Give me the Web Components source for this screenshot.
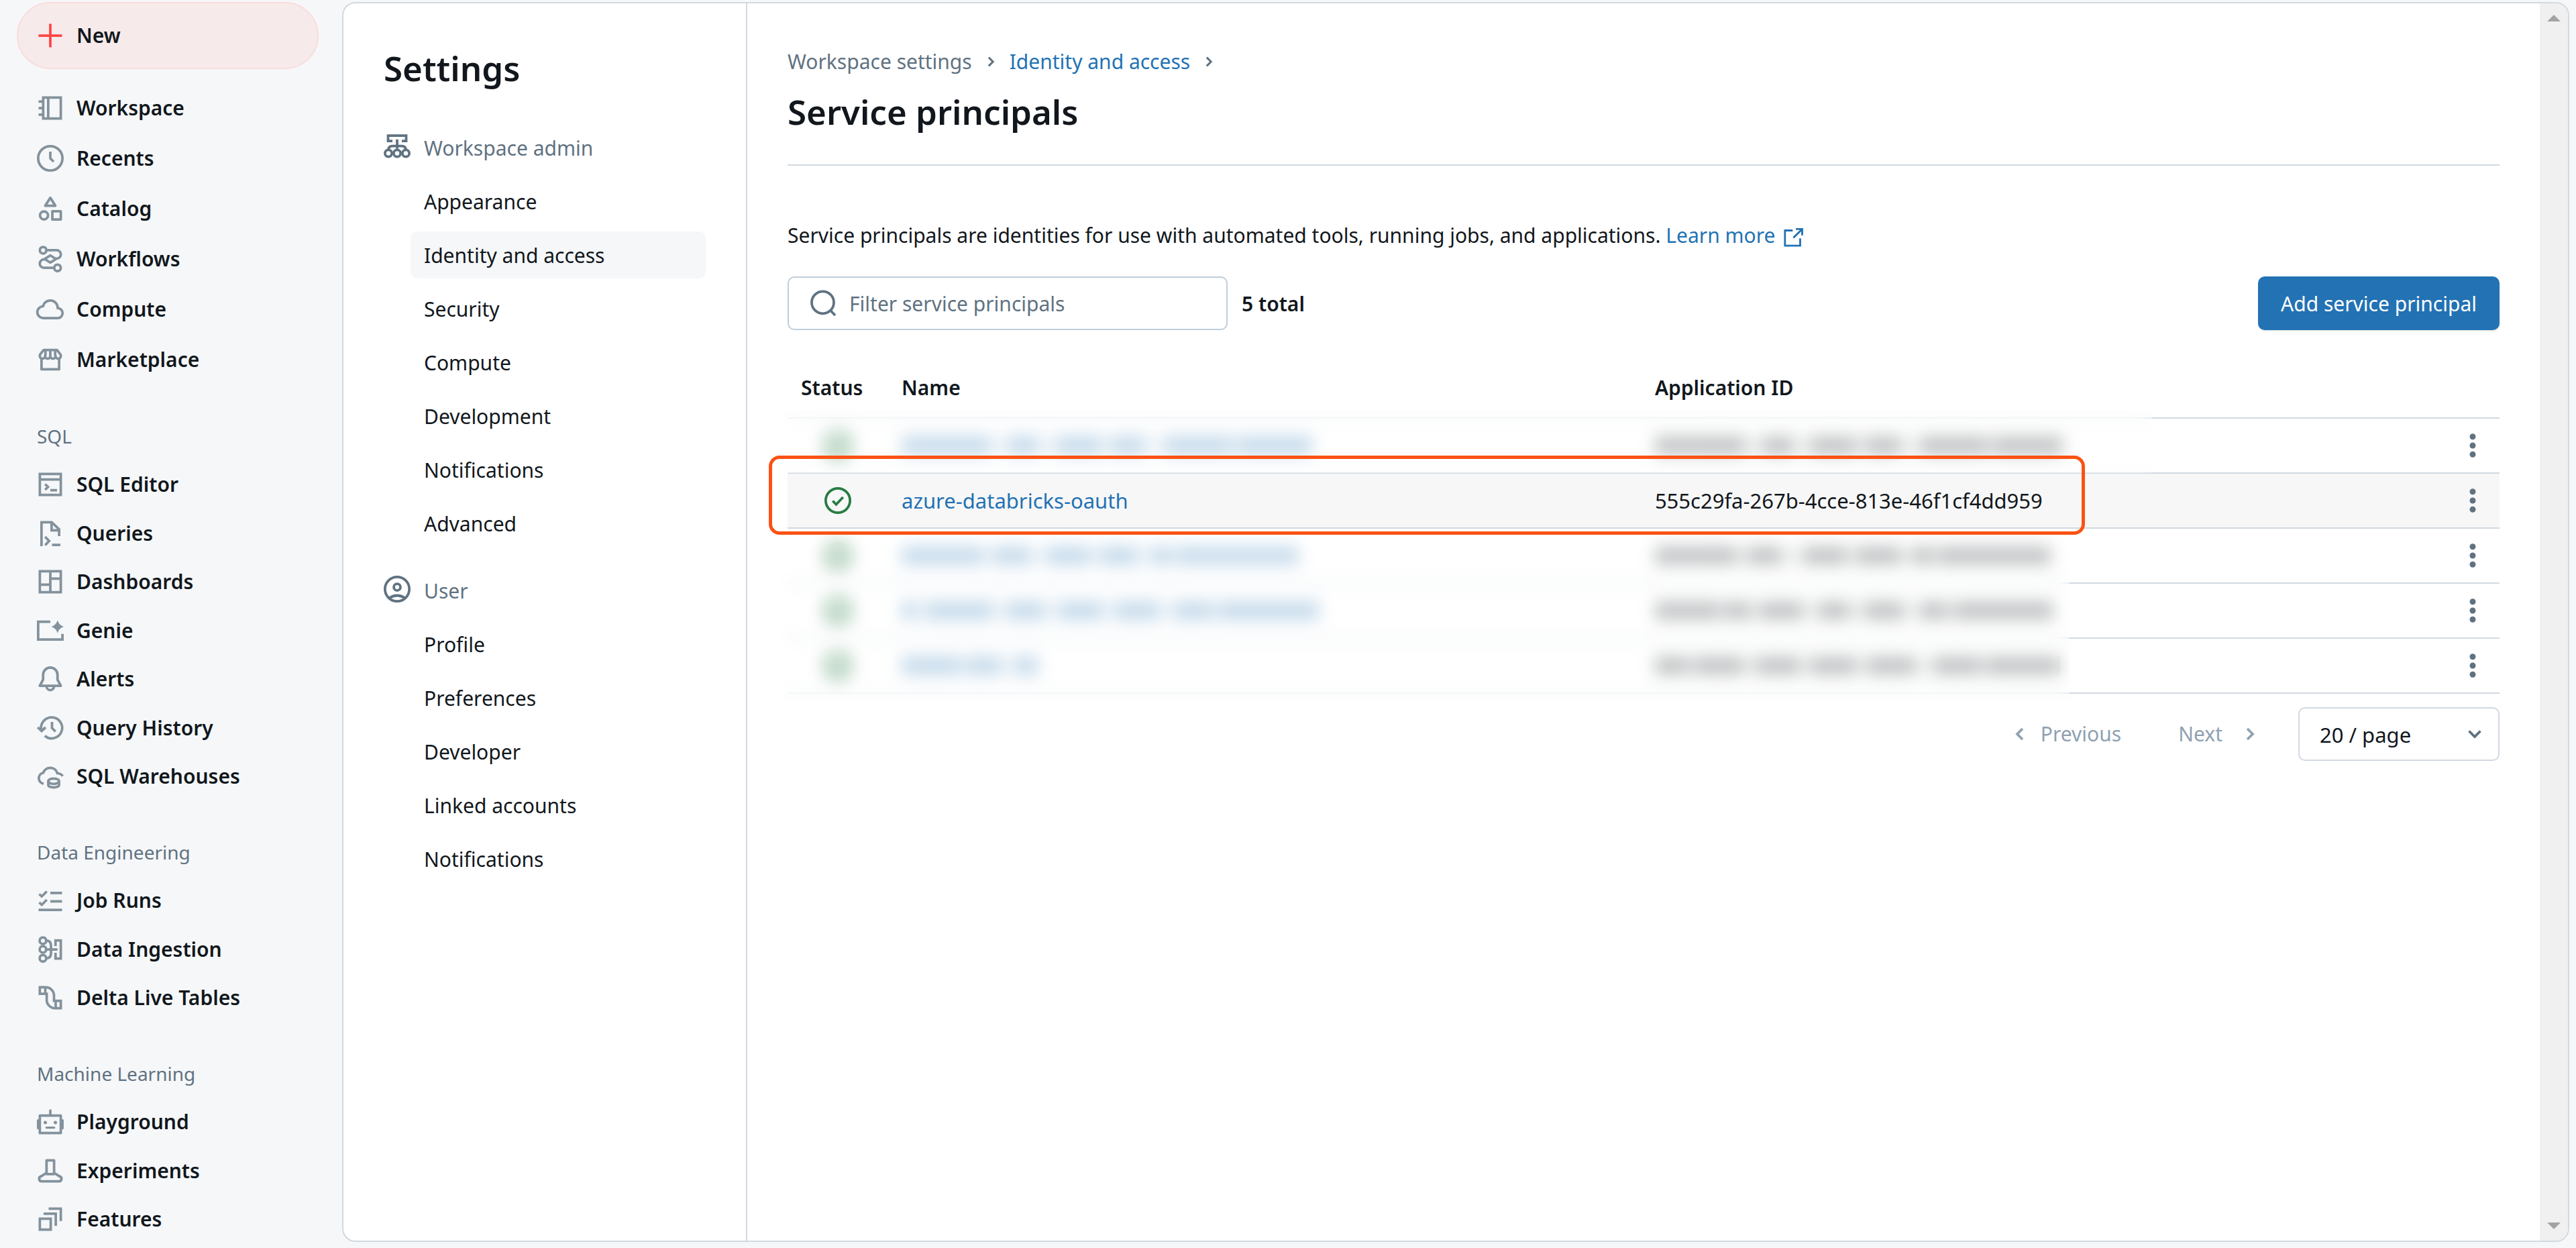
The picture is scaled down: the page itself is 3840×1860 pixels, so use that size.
<!DOCTYPE html>
<html lang="en">
<head>
<meta charset="utf-8">
<title>Service principals</title>
<style>
  :root {
    --bg: #f6f7f9;
    --border: #d1d9e1;
    --field-border: #c0cdd8;
    --text: #11171c;
    --muted: #5f7281;
    --nav-icon: #83929c;
    --disabled: #8fa1b2;
    --link: #2272b4;
    --success: #277c43;
    --callout: #fa5214;
    --text-base: 30px;
    --text-table: 31px;
    --text-small: 28px;
    --text-title: 51px;
  }
  body {
    margin: 0;
    background: var(--bg);
    color: var(--text);
    font: 400 var(--text-base)/50px "Noto Sans", "Open Sans", sans-serif;
  }
</style>
</head>
<body>
<app-shell>
  <side-nav slot="nav">
    <new-button>New</new-button>
    <nav-section class="roomy">
      <nav-item icon="workspace">Workspace</nav-item>
      <nav-item icon="clock">Recents</nav-item>
      <nav-item icon="catalog">Catalog</nav-item>
      <nav-item icon="workflows">Workflows</nav-item>
      <nav-item icon="cloud">Compute</nav-item>
      <nav-item icon="store">Marketplace</nav-item>
    </nav-section>
    <nav-section heading="SQL">
      <nav-item icon="editor">SQL Editor</nav-item>
      <nav-item icon="queries">Queries</nav-item>
      <nav-item icon="dashboard">Dashboards</nav-item>
      <nav-item icon="genie">Genie</nav-item>
      <nav-item icon="bell">Alerts</nav-item>
      <nav-item icon="history">Query History</nav-item>
      <nav-item icon="warehouse">SQL Warehouses</nav-item>
    </nav-section>
    <nav-section heading="Data Engineering">
      <nav-item icon="jobs">Job Runs</nav-item>
      <nav-item icon="ingestion">Data Ingestion</nav-item>
      <nav-item icon="pipeline">Delta Live Tables</nav-item>
    </nav-section>
    <nav-section heading="Machine Learning">
      <nav-item icon="robot">Playground</nav-item>
      <nav-item icon="flask">Experiments</nav-item>
      <nav-item icon="features">Features</nav-item>
    </nav-section>
  </side-nav>

  <settings-menu slot="menu">
    <settings-group icon="admin" heading="Workspace admin">
      <settings-link>Appearance</settings-link>
      <settings-link current>Identity and access</settings-link>
      <settings-link>Security</settings-link>
      <settings-link>Compute</settings-link>
      <settings-link>Development</settings-link>
      <settings-link>Notifications</settings-link>
      <settings-link>Advanced</settings-link>
    </settings-group>
    <settings-group icon="user" heading="User">
      <settings-link>Profile</settings-link>
      <settings-link>Preferences</settings-link>
      <settings-link>Developer</settings-link>
      <settings-link>Linked accounts</settings-link>
      <settings-link>Notifications</settings-link>
    </settings-group>
  </settings-menu>

  <principals-page></principals-page>
</app-shell>

<script>
const ICONS = {
  plus: '<path d="M8 1v14M1 8h14"/>',
  workspace: '<path d="M3.75 1.75h10.5v12.5H3.75zM6.75 1.75v12.5M1 4.1h2.5M1 8h2.5M1 11.9h2.5"/>',
  clock: '<circle cx="8" cy="8" r="7.25"/><path d="M8 4v4l2 2"/>',
  catalog: '<path stroke-linejoin="round" d="M8 1.5l3 4.75H5z"/><circle cx="4.25" cy="12" r="2.4"/><path stroke-linejoin="round" d="M9.2 9.5h5.05v4.9H9.2z"/>',
  workflows: '<circle cx="3.7" cy="2.75" r="1.95"/><circle cx="12.3" cy="13.25" r="1.95"/><path d="M5.6 2.75H11.8a2.5 2.5 0 0 1 0 5L11.2 8M10.4 13.25H4.2a2.5 2.5 0 0 1 0-5L4.8 8M8 5.9L11.4 8 8 10.1 4.6 8z"/>',
  cloud: '<path stroke-linejoin="round" d="M3.9 13.25h8.4a2.95 2.95 0 0 0 .1-5.95 4.4 4.4 0 0 0-8.7-1.1A3.5 3.5 0 0 0 3.9 13.25z"/>',
  store: '<path stroke-linejoin="round" d="M2.75 7.6v6.15h10.5V7.6M4 2.25h8l2.25 2.9v.7a1.55 1.55 0 0 1-3.1 0 1.55 1.55 0 0 1-3.15 0 1.55 1.55 0 0 1-3.15 0 1.55 1.55 0 0 1-3.1 0v-.7zM5.1 2.3v3.4M8 2.3v3.4M10.9 2.3v3.4"/>',
  editor: '<path d="M1.75 1.75h12.5v12.5H1.75zM1.75 5h12.5M8 11.4h4"/><path d="M4.9 7.8l1.7 1.7-1.7 1.7"/>',
  queries: '<path d="M2.75 15.6V1.35h6.1l4.4 4.2v4M8.75 1.5v4.6h4.5M4.9 10l2.4 2.5L4.9 15M9 14.8h5"/>',
  dashboard: '<path d="M1.75 1.75h12.5v12.5H1.75zM8 1.75v12.5M1.75 9.75H8M8 6.15h6.25"/>',
  genie: '<path d="M8 2.65H.75v10.6h14.5V9.9"/><path fill="currentColor" stroke="none" d="M12.3 1.8q.9 2.9 3.7 3.8-2.8.9-3.7 3.8-.9-2.9-3.7-3.8 2.8-.9 3.7-3.8z"/>',
  bell: '<path stroke-linejoin="round" d="M8 1.15A4.3 4.3 0 0 0 3.7 5.5V8.4L1.75 12h12.5L12.3 8.4V5.5A4.3 4.3 0 0 0 8 1.15z"/><path d="M5.75 12.2a2.25 2.45 0 0 0 4.5 0"/>',
  history: '<path d="M2.7 9.6A6.3 6.25 0 1 1 4.7 12.7"/><path d="M.5 7.6l2.3 2.2 2.4-2.2M9 4.4V8l2.1 2.1"/>',
  warehouse: '<path d="M4 12.4A3.3 3.3 0 0 1 3.8 5.9a4.4 4.4 0 0 1 8.4.3q2.2.2 3.2 1.7"/><ellipse cx="10" cy="10.9" rx="3.2" ry="1.6"/><path d="M6.8 10.9v2.3c0 .8 1.4 1.4 3.2 1.4s3.2-.6 3.2-1.4v-2.3"/>',
  jobs: '<path d="M1.4 4.2l1.5 1.4 3-3M1.4 9.2l1.5 1.4 3-3M8 3.5h7M8 8.5h7M1 13.6h14"/>',
  ingestion: '<circle cx="3.6" cy="2.75" r="1.95"/><circle cx="3.6" cy="8" r="1.95"/><circle cx="3.6" cy="13.25" r="1.95"/><path d="M5.5 2.75q2.9 0 2.9 2.9v4.7q0 2.9-2.9 2.9M5.5 8h6.8M11.1 6V2.6h3.15v10.8H11.1V10"/>',
  pipeline: '<path d="M1.75 1.75H5.2a5 5 0 0 1 5 5v3.1h4.05v4.4h-3.4a5 5 0 0 1-5-5V5.6H1.75zM5 1.75V5.6M11.2 9.9v4.3"/>',
  robot: '<path stroke-linejoin="round" d="M1.75 4.25h12.5v10.4H1.75z"/><path stroke-linecap="round" d="M8 1.2V4M.75 7.1v4.6M15.25 7.1v4.6"/><path stroke-linecap="round" stroke-width="1.3" d="M5.7 11.4h4.6"/><circle cx="5" cy="8.4" r="1" fill="currentColor" stroke="none"/><circle cx="11" cy="8.4" r="1" fill="currentColor" stroke="none"/>',
  flask: '<path stroke-linejoin="round" d="M5.75 1.75h4.5v7.5l3.4 2.1a1.5 1.5 0 0 1-.7 2.9H3.05a1.5 1.5 0 0 1-.7-2.9l3.4-2.1zM5.5 9.9h5"/>',
  features: '<path d="M1.75 7.75h6.5v6.5h-6.5zM4 4.75h7.25V12M7 1.75h7.25v7.3"/>',
  admin: '<path d="M5.2 4.8H2.6V1.6h10.8v3.2h-2.6M8 3.9v5.6"/><path d="M2.8 9.9q.2-2.1 2.4-2.1h5.6q2.2 0 2.4 2.1"/><circle cx="2.8" cy="12.2" r="2.05"/><circle cx="8" cy="12.2" r="2.05"/><circle cx="13.2" cy="12.2" r="2.05"/>',
  user: '<circle cx="8" cy="8" r="7.25"/><circle cx="8" cy="6.8" r="2"/><path d="M3.2 13.4q4.8-3.2 9.6 0"/>',
  right: '<path d="M6.4 4.8L9.6 8l-3.2 3.2"/>',
  left: '<path d="M9.6 4.8L6.4 8l3.2 3.2"/>',
  down: '<path d="M4.6 6.2L8 9.6l3.4-3.4"/>',
  search: '<circle cx="7.8" cy="7.5" r="6.6"/><path d="M12.2 12.1l3 3.1"/>',
  external: '<path d="M7.6 2.4H1.5v12.1h12.1V8.6M8.2 8.2L14.8 1.7M10.2 1.3h5v5"/>',
  check: '<circle cx="8" cy="8" r="7.25"/><path d="M4.9 8.2l2.1 2.1 4.1-4.3"/>',
  kebab: '<g fill="currentColor" stroke="none"><circle cx="8" cy="2.7" r="1.8"/><circle cx="8" cy="8" r="1.8"/><circle cx="8" cy="13.3" r="1.8"/></g>',
};

const define = (name, render) => customElements.define(name, class extends HTMLElement {
  constructor() {
    super();
    this.attachShadow({ mode: 'open' });
  }
  connectedCallback() {
    this.shadowRoot.innerHTML = render(this);
  }
});

define('ui-icon', el => `
  <style>
    :host { display: inline-block; flex: none; width: 40px; height: 40px; }
    svg { display: block; width: 100%; height: 100%; overflow: visible; }
  </style>
  <svg viewBox="0 0 16 16" fill="none" stroke="currentColor" stroke-width="1.5" aria-hidden="true">${ICONS[el.getAttribute('name')]}</svg>`);

define('app-shell', () => `
  <style>
    :host { display: flex; box-sizing: border-box; min-height: 100vh; padding-top: 3px; }
    ::slotted([slot="nav"]) { flex: 0 0 510px; }
    .panel {
      flex: 1; min-width: 0; display: flex; overflow: hidden; margin: 0 10px 9px 0;
      background: #fff; border: 2px solid var(--border); border-radius: 20px;
    }
    main { flex: 1; min-width: 0; }
    .scroll {
      flex: none; width: 42px; box-sizing: border-box; padding: 17px 0;
      display: flex; flex-direction: column; justify-content: space-between; align-items: center;
      background: #f0f0f0; color: #a3a3a3;
    }
    .scroll svg { width: 20px; height: 10px; fill: currentColor; }
  </style>
  <slot name="nav"></slot>
  <div class="panel">
    <slot name="menu"></slot>
    <main><slot></slot></main>
    <div class="scroll" aria-hidden="true">
      <svg viewBox="0 0 20 10"><path d="M0 10L10 0l10 10z"/></svg>
      <svg viewBox="0 0 20 10"><path d="M0 0h20L10 10z"/></svg>
    </div>
  </div>`);

define('side-nav', () => `
  <style>:host { display: block; }</style>
  <nav><slot></slot></nav>`);

define('new-button', () => `
  <style>
    :host { display: block; margin: 0 35px 20px 25px; }
    button {
      display: flex; align-items: center; gap: 19px;
      width: 100%; height: 100px; padding: 0 28px;
      border: 2px solid #fadcdd; border-radius: 50px; background: #f7eaea;
      color: var(--text); font: inherit; font-weight: 600;
    }
    ui-icon { color: #ff4545; }
  </style>
  <button type="button"><ui-icon name="plus"></ui-icon><slot></slot></button>`);

define('nav-section', el => {
  const heading = el.getAttribute('heading');
  return `
  <style>
    :host { display: block; --row: 72px; --row-even: 73px; margin-bottom: 57px; }
    :host(:last-child) { margin-bottom: 0; }
    :host(.roomy) { --row: 75px; --row-even: 75px; }
    h2 { margin: 0 0 16px 55px; font-size: var(--text-small); line-height: 40px; font-weight: 400; color: var(--muted); }
    ::slotted(nav-item) { height: var(--row); }
    ::slotted(nav-item:nth-child(even)) { height: var(--row-even); }
  </style>
  ${heading ? `<h2>${heading}</h2>` : ''}<slot></slot>`;
});

define('nav-item', el => `
  <style>
    :host { display: block; }
    a {
      display: flex; align-items: center; gap: 19px; height: 100%; padding-left: 55px;
      color: var(--text); font-weight: 600; text-decoration: none;
    }
    ui-icon { color: var(--nav-icon); }
  </style>
  <a href="#"><ui-icon name="${el.getAttribute('icon')}"></ui-icon><slot></slot></a>`);

define('settings-menu', () => `
  <style>
    :host { display: block; flex: 0 0 600px; box-sizing: content-box; border-right: 2px solid var(--border); }
    h1 { margin: 66px 60px 54px; font-size: var(--text-title); line-height: 60px; font-weight: 600; }
    nav { display: flex; flex-direction: column; gap: 30px; padding: 0 60px; }
  </style>
  <h1>Settings</h1>
  <nav><slot></slot></nav>`);

define('settings-group', el => `
  <style>
    :host { display: flex; flex-direction: column; gap: 10px; }
    h2 {
      display: flex; align-items: center; gap: 20px;
      box-sizing: border-box; height: 70px; margin: 0; padding-top: 2px;
      color: var(--muted); font-size: var(--text-base); font-weight: 400;
    }
    ui-icon { margin-bottom: 6px; }
  </style>
  <h2><ui-icon name="${el.getAttribute('icon')}"></ui-icon>${el.getAttribute('heading')}</h2>
  <slot></slot>`);

define('settings-link', () => `
  <style>
    :host { display: block; margin-left: 40px; border-radius: 10px; }
    :host([current]) { background: var(--bg); }
    a { display: block; padding: 11px 20px 9px; color: var(--text); text-decoration: none; }
  </style>
  <a href="#"><slot></slot></a>`);

define('crumb-trail', () => `
  <style>
    :host { display: flex; align-items: center; gap: 12px; color: var(--muted); }
    a { color: var(--link); text-decoration: none; }
    ui-icon { width: 32px; height: 32px; }
  </style>
  <span>Workspace settings</span><ui-icon name="right"></ui-icon>
  <a href="#">Identity and access</a><ui-icon name="right"></ui-icon>`);

define('filter-bar', () => `
  <style>
    :host { display: flex; align-items: center; gap: 21px; }
    label {
      display: flex; align-items: center; gap: 19px; box-sizing: border-box;
      width: 656px; height: 80px; padding: 0 31px;
      border: 2px solid var(--field-border); border-radius: 10px; color: var(--muted);
    }
    input {
      flex: 1; min-width: 0; padding: 2px 0 0; border: 0; outline: 0; background: none;
      color: var(--text); font: inherit;
    }
    input::placeholder { color: var(--muted); opacity: 1; }
    strong { flex: 1; padding-top: 2px; font-weight: 600; }
    button {
      height: 80px; padding: 2px 34px 0; border: 0; border-radius: 10px;
      background: var(--link); color: #fff; font: inherit;
      box-shadow: 0 2px 2px rgba(0, 0, 0, .08);
    }
  </style>
  <label><ui-icon name="search"></ui-icon><input type="text" placeholder="Filter service principals" aria-label="Filter service principals"></label>
  <strong>5 total</strong>
  <button type="button">Add service principal</button>`);

/* Stand-in for a hidden value: alternating bar and gap widths. */
define('hidden-value', el => `
  <style>
    :host { display: flex; align-items: center; height: 80px; opacity: .25; }
    i { height: 28px; background: currentColor; }
  </style>
  ${el.getAttribute('bars').split(' ').map((n, k) =>
    k % 2 ? `<i style="width:${n}px;opacity:.25"></i>` : `<i style="width:${n}px"></i>`).join('')}`);

const ROWS = [
  { name: '132 26 46 26 68 14 50 30 100 8 112', id: '134 26 46 26 68 14 52 30 100 8 104' },
  { name: 'azure-databricks-oauth', id: '555c29fa-267b-4cce-813e-46f1cf4dd959', current: true },
  { name: '122 14 56 24 66 14 56 20 30 8 182', id: '122 16 50 34 64 14 66 18 30 8 168' },
  { name: '22 14 100 20 58 20 66 18 66 22 58 8 150', id: '96 8 38 14 64 24 46 22 58 26 40 10 148' },
  { name: '88 8 52 20 36', id: '50 8 74 18 66 16 68 16 72 28 70 8 110' },
];

define('principals-table', () => `
  <style>
    :host { display: block; position: relative; }
    table { width: 100%; table-layout: fixed; border-collapse: separate; border-spacing: 0; font-size: var(--text-table); }
    .status { width: 150px; }
    .name { width: 44%; }
    .actions { width: 80px; }
    th { height: 88px; padding: 2px 20px 0; font-size: var(--text-base); font-weight: 600; text-align: left; }
    td { height: 80px; padding: 0 20px; }
    th, td { border-bottom: 2px solid var(--border); }
    td:first-child, td:last-child { text-align: center; color: var(--success); }
    .current td { background: #f7f7f7; }
    a, .link { color: var(--link); text-decoration: none; }
    ui-icon { display: block; margin: 0 auto; }
    button { display: block; width: 40px; height: 40px; padding: 0; border: 0; background: none; color: var(--muted); }
    .veil { position: absolute; left: -14px; backdrop-filter: blur(12px); -webkit-backdrop-filter: blur(12px); }
    .veil.top { top: 80px; height: 93px; right: 518px; }
    .veil.bottom { top: 256px; height: 257px; right: 641px; }
    .callout {
      position: absolute; box-sizing: border-box; left: -28px; right: 618px; top: 147px; height: 118px;
      border: 5px solid var(--callout); border-radius: 16px;
    }
  </style>
  <table>
    <colgroup><col class="status"><col class="name"><col><col class="actions"></colgroup>
    <thead><tr><th scope="col">Status</th><th scope="col">Name</th><th scope="col">Application ID</th><th></th></tr></thead>
    <tbody>
      ${ROWS.map(r => `<tr class="${r.current ? 'current' : ''}">
        <td><ui-icon name="check"></ui-icon></td>
        <td>${r.current ? `<a href="#">${r.name}</a>` : `<hidden-value class="link" bars="${r.name}"></hidden-value>`}</td>
        <td>${r.current ? r.id : `<hidden-value bars="${r.id}"></hidden-value>`}</td>
        <td><button type="button" aria-label="Row actions"><ui-icon name="kebab"></ui-icon></button></td>
      </tr>`).join('')}
    </tbody>
  </table>
  <div class="veil top"></div>
  <div class="veil bottom"></div>
  <div class="callout"></div>`);

define('page-controls', () => `
  <style>
    :host { display: flex; justify-content: flex-end; align-items: center; }
    button {
      display: flex; align-items: center; gap: 11px; padding: 0; border: 0; background: none;
      color: var(--disabled); font: inherit;
    }
    .next { gap: 21px; margin: 0 52px 0 85px; }
    .size { display: grid; align-items: center; width: 300px; }
    .size > * { grid-area: 1 / 1; }
    select {
      appearance: none; box-sizing: border-box; width: 100%; height: 80px; padding: 2px 30px 0;
      border: 2px solid var(--border); border-radius: 10px; background: #fff;
      color: var(--text); font: inherit; font-size: var(--text-table);
    }
    .size ui-icon { justify-self: end; margin-right: 17px; color: var(--muted); pointer-events: none; }
  </style>
  <button type="button" disabled><ui-icon name="left"></ui-icon>Previous</button>
  <button type="button" class="next" disabled>Next<ui-icon name="right"></ui-icon></button>
  <div class="size">
    <select aria-label="Rows per page"><option>20 / page</option></select>
    <ui-icon name="down"></ui-icon>
  </div>`);

define('principals-page', () => `
  <style>
    :host { display: block; padding: 62px 60px 60px; }
    h2 { margin: 14px 0 44px; font-size: var(--text-title); line-height: 70px; font-weight: 600; }
    hr { margin: 0; border: 0; border-top: 2px solid var(--border); }
    p { margin: 79px 0 36px; }
    a { color: var(--link); text-decoration: none; }
    p ui-icon { width: 30px; height: 30px; margin-left: 12px; vertical-align: middle; }
    principals-table { margin: 40px 0 20px; }
  </style>
  <crumb-trail></crumb-trail>
  <h2>Service principals</h2>
  <hr>
  <p>Service principals are identities for use with automated tools, running jobs, and applications. <a href="#">Learn more<ui-icon name="external"></ui-icon></a></p>
  <filter-bar></filter-bar>
  <principals-table></principals-table>
  <page-controls></page-controls>`);
</script>
</body>
</html>
